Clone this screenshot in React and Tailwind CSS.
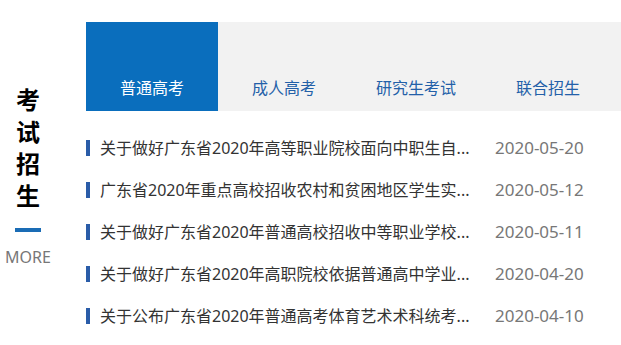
import React, { useState } from 'react';

const tabs = ['普通高考', '成人高考', '研究生考试', '联合招生'];

const news = [
    { title: '关于做好广东省2020年高等职业院校面向中职生自...', date: '2020-05-20' },
    { title: '广东省2020年重点高校招收农村和贫困地区学生实...', date: '2020-05-12' },
    { title: '关于做好广东省2020年普通高校招收中等职业学校...', date: '2020-05-11' },
    { title: '关于做好广东省2020年高职院校依据普通高中学业...', date: '2020-04-20' },
    { title: '关于公布广东省2020年普通高考体育艺术术科统考...', date: '2020-04-10' },
];

const App = () => {
    const [active, setActive] = useState(0);

    return (
        <div className="flex w-[621px] h-[345px] bg-white overflow-hidden font-['Noto_Sans','Noto_Sans_CJK_SC',sans-serif]">
            {/* left title column */}
            <div className="w-[56px] pt-[83px] flex flex-col items-center">
                {['考', '试', '招', '生'].map((c) => (
                    <span key={c} className="block text-[24px] leading-[32px] font-bold text-black font-['Noto_Sans_CJK_SC',sans-serif]">{c}</span>
                ))}
                <div className="mt-[17px] w-[26px] h-[4px] bg-[#1a6cb5]" />
                <a className="mt-[15px] text-[16px] leading-[20px] text-[#777]">MORE</a>
            </div>

            <div className="ml-[30px] flex-1">
                {/* tabs */}
                <div className="mt-[22px] h-[89px] bg-[#f2f2f2] flex">
                    {tabs.map((tab, index) => (
                        <button
                            key={tab}
                            onClick={() => setActive(index)}
                            className={`w-[132px] h-full flex items-end justify-center pb-[11px] text-[16px] leading-[24px] ${active === index ? 'bg-[#0a6ebd] text-white' : 'text-[#2360a8]'}`}
                        >
                            {tab}
                        </button>
                    ))}
                </div>

                {/* news list */}
                <ul className="mt-[16px]">
                    {news.map((item) => (
                        <li key={item.date} className="h-[42px] flex items-center">
                            <span className="w-[4px] h-[16px] bg-[#2a5ca8]" />
                            <span className="ml-[10px] w-[395px] text-[16px] text-[#333] whitespace-nowrap overflow-hidden">{item.title}</span>
                            <span className="text-[17px] text-[#777]">{item.date}</span>
                        </li>
                    ))}
                </ul>
            </div>
        </div>
    );
};

export default App;
